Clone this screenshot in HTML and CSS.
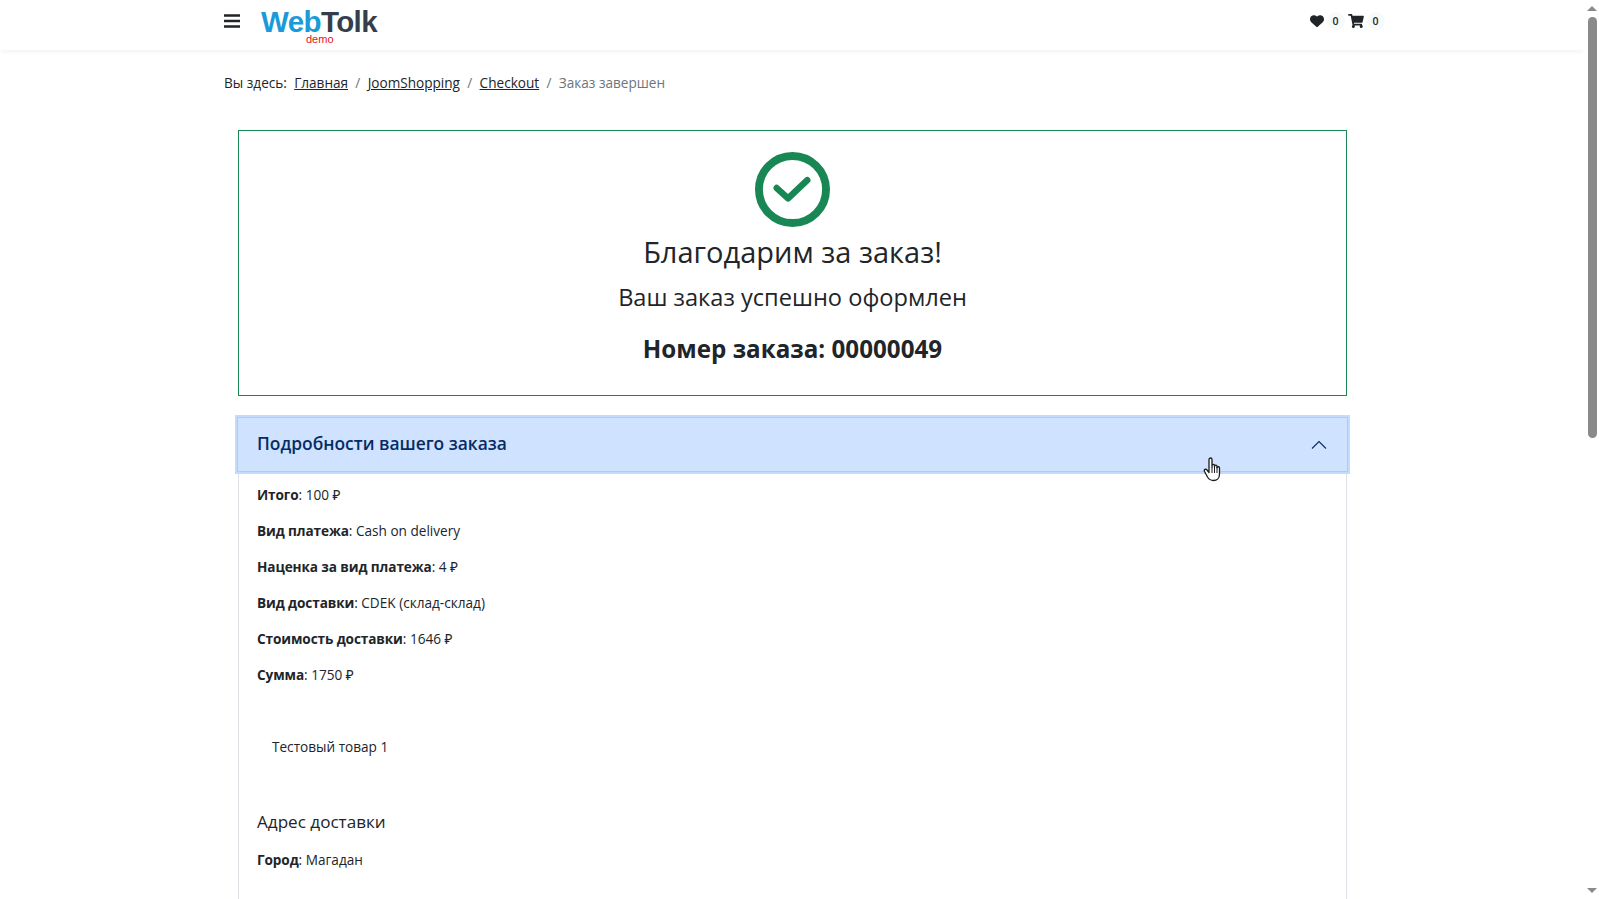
FILE: index.html
```html
<!DOCTYPE html>
<html lang="ru">
<head>
<meta charset="utf-8">
<title>Заказ завершен</title>
<link rel="stylesheet" href="styles.css">
</head>
<body>
<div class="page">
  <header class="topbar">
    <div class="topbar-inner">
      <svg class="burger" viewBox="0 0 16 14" width="16" height="14"><path d="M0 1.5h16M0 7h16M0 12.500h16" stroke="#212529" stroke-width="2.400" fill="none"/></svg>
      <div class="logo">
        <span class="logo-word"><span class="logo-web">Web</span><span class="logo-tolk">Tolk</span></span>
        <span class="logo-demo">demo</span>
      </div>
      <div class="counters">
        <svg class="ico-heart" viewBox="0 0 512 512" width="14" height="14"><path fill="#212529" d="M47.600 300.400L228.300 469c7.500 7 17.400 10.900 27.700 10.900s20.200-3.900 27.700-10.900l180.700-168.600C494.800 272.100 512 232.400 512 190.900v-5.800c0-69.900-50.500-129.500-119.400-141C347 36.500 300.600 51.400 268 84L256 96 244 84c-32.600-32.600-79-47.500-124.600-39.900C50.500 55.600 0 115.200 0 185.100v5.800c0 41.500 17.200 81.200 47.600 109.500z"/></svg>
        <span class="count">0</span>
        <svg class="ico-cart" viewBox="0 0 576 512" width="16" height="14"><path fill="#212529" d="M528.120 301.319l47.273-208C578.806 78.301 567.391 64 551.990 64H159.208l-9.166-44.810C147.758 8.021 137.930 0 126.529 0H24C10.745 0 0 10.745 0 24v16c0 13.255 10.745 24 24 24h69.883l70.248 343.435C147.325 417.100 136 435.222 136 456c0 30.928 25.072 56 56 56s56-25.072 56-56c0-15.674-6.447-29.835-16.824-40h209.647C430.447 426.165 424 440.326 424 456c0 30.928 25.072 56 56 56s56-25.072 56-56c0-22.172-12.888-41.332-31.579-50.405l5.517-24.276c3.413-15.018-8.002-29.319-23.403-29.319H218.117l-6.545-32h293.145c11.206 0 20.920-7.754 23.403-18.681z"/></svg>
        <span class="count">0</span>
      </div>
    </div>
  </header>

  <main class="content">
    <nav class="crumbs">
      <span class="crumb-label">Вы здесь:</span>
      <a class="crumb-link" href="#">Главная</a>
      <span class="crumb-sep">/</span>
      <a class="crumb-link" href="#">JoomShopping</a>
      <span class="crumb-sep">/</span>
      <a class="crumb-link" href="#">Checkout</a>
      <span class="crumb-sep">/</span>
      <span class="crumb-current">Заказ завершен</span>
    </nav>

    <section class="thanks">
      <svg class="check" viewBox="0 0 76 76" width="75" height="75"><circle cx="38" cy="38" r="34" fill="none" stroke="#198754" stroke-width="8"/><path d="M22 36.500L33.500 47 53 28.500" fill="none" stroke="#198754" stroke-width="6.500" stroke-linecap="round" stroke-linejoin="round"/></svg>
      <h1 class="thanks-title">Благодарим за заказ!</h1>
      <p class="thanks-sub">Ваш заказ успешно оформлен</p>
      <p class="thanks-num">Номер заказа: 00000049</p>
    </section>

    <section class="accordion">
      <div class="acc-head">
        <span class="acc-title">Подробности вашего заказа</span>
        <svg class="acc-chevron" viewBox="0 0 16 16" width="16" height="16"><path d="M1 11.500L8 4.500l7 7" fill="none" stroke="#052c65" stroke-width="1.100"/></svg>
        <svg class="cursor" viewBox="0 0 20 26" width="20" height="26"><path d="M6 3.500c0-2 3-2 3 0V11l0-1.500c0-1.500 2.500-1.500 2.500 0V11l0-.8c0-1.500 2.500-1.500 2.500 0v1.500c0-1.300 2.500-1.300 2.500 0V18c0 4-2.500 6.500-6 6.500-3 0-4.500-1-6-3.500L1.500 15.500c-1-2 1.500-3 2.500-1.500L6 16.500z" fill="#fff" stroke="#1b1b1b" stroke-width="1.300" stroke-linejoin="round"/><path d="M9 11v6M11.500 11v6M14 11v6" stroke="#1b1b1b" stroke-width="1"/></svg>
      </div>
      <div class="acc-body">
        <p class="row"><b>Итого</b>: 100 ₽</p>
        <p class="row"><b>Вид платежа</b>: Cash on delivery</p>
        <p class="row"><b>Наценка за вид платежа</b>: 4 ₽</p>
        <p class="row"><b>Вид доставки</b>: CDEK (склад-склад)</p>
        <p class="row"><b>Стоимость доставки</b>: 1646 ₽</p>
        <p class="row"><b>Сумма</b>: 1750 ₽</p>
        <p class="item">Тестовый товар 1</p>
        <h2 class="addr-title">Адрес доставки</h2>
        <p class="row"><b>Город</b>: Магадан</p>
      </div>
    </section>
  </main>
</div>
<div class="scrollbar">
  <span class="arrow-up"></span>
  <span class="thumb"></span>
  <span class="arrow-down"></span>
</div>
</body>
</html>
```
FILE: styles.css
```css
* { box-sizing: border-box; }
html, body { height: 100%; margin: 0; overflow: hidden; }
body {
  display: flex;
  font-family: "Open Sans", "Noto Sans", sans-serif;
  color: #212529;
  background: #fff;
  font-size: 13.600px;
}
.page { flex: 1; min-width: 0; height: 899px; overflow: hidden; }
.topbar {
  height: 50px;
  box-shadow: 0 2px 4px rgba(0,0,0,.05);
  background: #fff;
}
.topbar-inner {
  width: 1140px;
  margin: 0 auto;
  padding-left: 2px;
  display: flex;
  align-items: center;
  height: 42px;
}
.burger { margin-right: 21px; }
.logo { position: relative; width: 120px; height: 42px; padding-top: 8px; }
.logo-word {
  font-family: "Liberation Sans", sans-serif;
  font-weight: 700;
  font-size: 29.500px;
  letter-spacing: -.6px;
  line-height: 28px;
  display: block;
}
.logo-web { color: #1a9ad9; }
.logo-tolk { color: #343f4b; }
.logo-demo {
  position: absolute;
  left: 45px;
  top: 32px;
  font-family: "Liberation Sans", sans-serif;
  font-size: 11px;
  line-height: 14px;
  color: #e8101c;
}
.counters {
  margin-left: auto;
  margin-right: -25.500px;
  display: flex;
  align-items: center;
}
.count {
  width: 18px;
  height: 18px;
  border-radius: 50%;
  background: #f8f9fa;
  font-size: 10.500px;
  font-weight: 600;
  line-height: 18px;
  text-align: center;
  margin: 0 3px 0 3px;
}
.content { width: 1140px; margin: 0 auto; }
.crumbs {
  display: flex;
  gap: 7.300px;
  padding: 23px 0 0 2px;
  height: 80px;
  line-height: 19px;
  color: #212529;
}
.crumb-link { color: #212529; }
.crumb-sep, .crumb-current { color: #6c757d; }
.thanks {
  margin: 0 15px 0 16px;
  height: 266px;
  border: 1px solid #198754;
  display: flex;
  flex-direction: column;
  align-items: center;
  padding-top: 21px;
}
.check { display: block; }
.thanks-title { margin: 6px 0 0; font-size: 29px; font-weight: 400; line-height: 38px; }
.thanks-sub { margin: 10px 0 0; font-size: 23.600px; line-height: 32px; }
.thanks-num { margin: 20px 0 0; font-size: 24.200px; line-height: 32px; font-weight: 700; }
.accordion { margin: 21px 15px 0 16px; }
.acc-head {
  position: relative;
  margin: 0 -1px;
  height: 55px;
  display: flex;
  align-items: center;
  padding: 0 20px 3px 19px;
  background: #cfe2ff;
  border: 1px solid #a9ccfd;
  box-shadow: 0 0 0 2px #c2dbfe;
}
.acc-title { font-size: 17.400px; font-weight: 600; color: #052c65; }
.acc-chevron { margin: 3px 0 0 auto; }
.cursor { position: absolute; left: 965px; top: 38px; }
.acc-body { border: 1px solid #dee2e6; border-top: 0; padding: 13px 18px; height: 500px; }
.row { margin: 0 0 16.100px; line-height: 20px; }
.row b { font-weight: 700; letter-spacing: -.1px; }
.item { margin: 52px 0 0 15px; line-height: 20px; }
.addr-title { margin: 53px 0 0; font-size: 17.100px; font-weight: 400; line-height: 24px; }
.addr-title + .row { margin-top: 16px; }
.scrollbar {
  width: 15px;
  flex: none;
  padding-left: 1px;
  background: #fff;
  display: flex;
  flex-direction: column;
  align-items: center;
}
.arrow-up {
  margin-top: 6px;
  width: 0; height: 0;
  border-left: 5px solid transparent;
  border-right: 5px solid transparent;
  border-bottom: 5px solid #8a8a8a;
}
.thumb {
  margin-top: 6px;
  width: 9px;
  height: 421px;
  border-radius: 5px;
  background: #8a8a8a;
}
.arrow-down {
  margin-top: auto;
  margin-bottom: 6px;
  width: 0; height: 0;
  border-left: 5px solid transparent;
  border-right: 5px solid transparent;
  border-top: 5px solid #8a8a8a;
}
```
